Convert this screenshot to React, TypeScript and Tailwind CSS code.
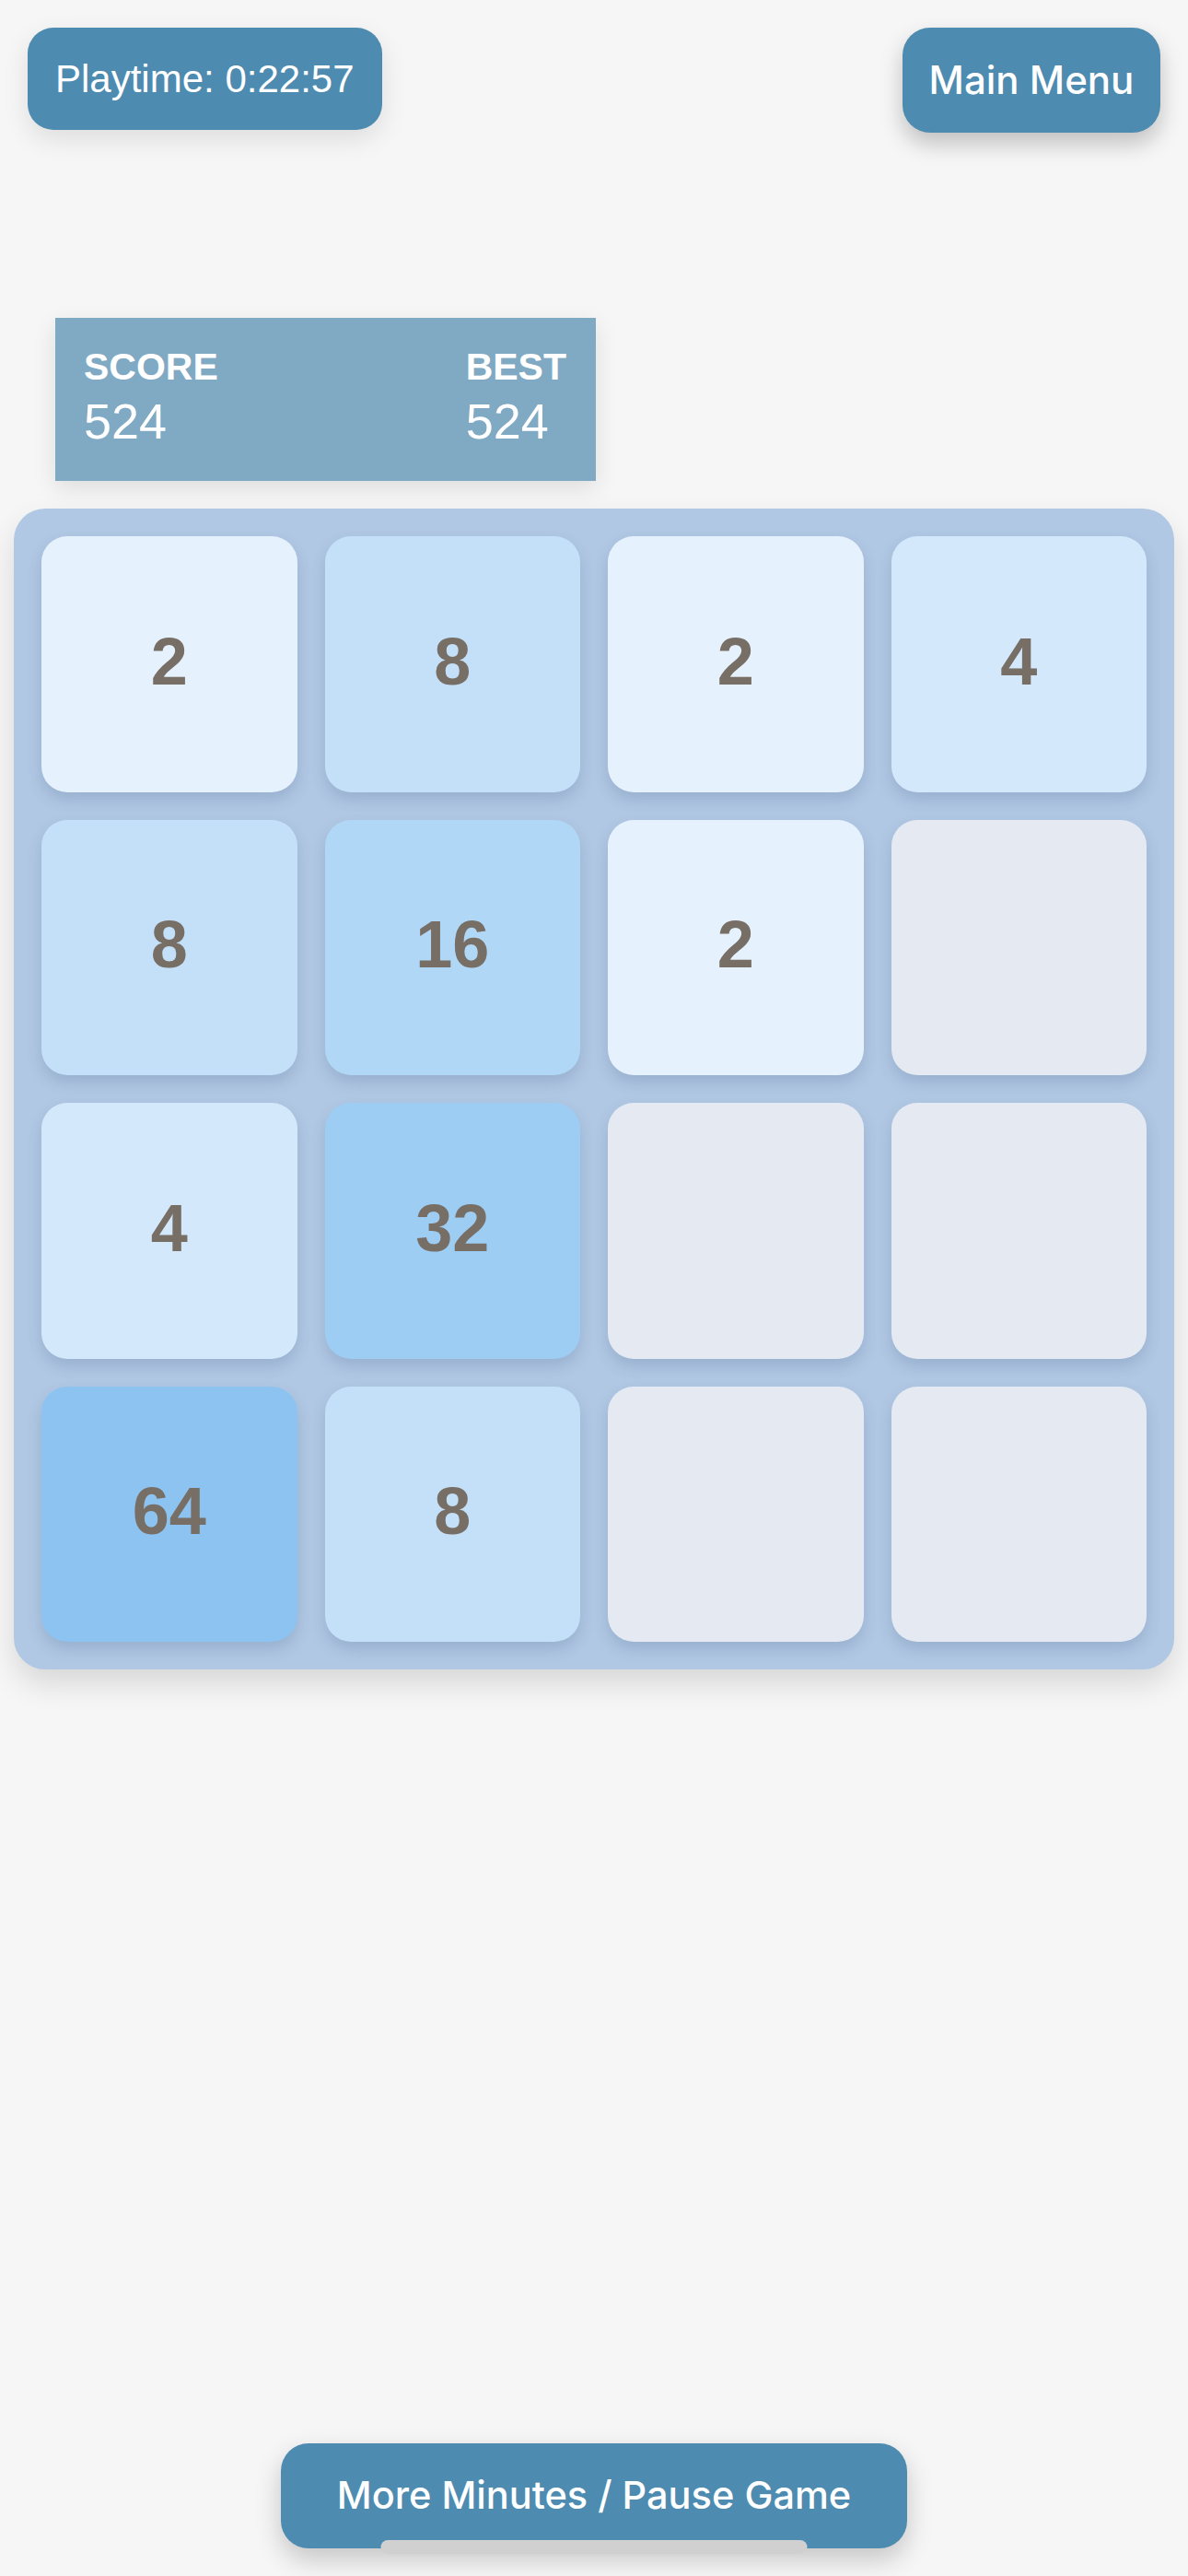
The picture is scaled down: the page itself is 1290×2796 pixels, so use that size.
import React from "react";

const tiles: (number | null)[][] = [
  [2, 8, 2, 4],
  [8, 16, 2, null],
  [4, 32, null, null],
  [64, 8, null, null],
];

function tileClass(v: number | null): string {
  switch (v) {
    case 2:
      return "bg-[#e5f1fd]";
    case 4:
      return "bg-[#d4e8fb]";
    case 8:
      return "bg-[#c3e0f8]";
    case 16:
      return "bg-[#b1d7f6]";
    case 32:
      return "bg-[#9ecdf4]";
    case 64:
      return "bg-[#8dc3f0]";
    default:
      return "bg-[#e5eaf2]";
  }
}

export default function App() {
  return (
    <div className="relative min-h-[2796px] w-full bg-[#f6f6f6] flex flex-col font-['Liberation_Sans',Arial,sans-serif]">
      {/* Top bar */}
      <div className="flex justify-between items-start px-[30px] pt-[30px]">
        <div className="h-[111px] px-[30px] flex items-center rounded-[28px] bg-[#4e8bb0] text-white text-[42px] leading-none shadow-[0_10px_28px_rgba(0,0,0,0.10)]">
          Playtime: 0:22:57
        </div>
        <div className="h-[114px] w-[280px] flex items-center justify-center rounded-[30px] bg-[#4e8bb0] text-white text-[42px] leading-none font-medium font-['Inter',sans-serif] shadow-[0_12px_24px_rgba(0,0,0,0.22)]">
          Main Menu
        </div>
      </div>

      {/* Score box */}
      <div className="ml-[60px] mt-[201px] w-[587px] h-[177px] bg-[#80a9c4] pl-[31px] pr-[32px] pt-[33px] flex justify-between text-white shadow-[0_8px_24px_rgba(0,0,0,0.10)]">
        <div className="flex flex-col">
          <div className="text-[41px] leading-none font-bold">SCORE</div>
          <div className="mt-[11px] text-[54px] leading-none">524</div>
        </div>
        <div className="flex flex-col">
          <div className="text-[41px] leading-none font-bold">BEST</div>
          <div className="mt-[11px] text-[54px] leading-none">524</div>
        </div>
      </div>

      {/* Board */}
      <div className="ml-[15px] mt-[30px] w-[1260px] h-[1260px] rounded-[34px] bg-[#b1c8e4] p-[30px] grid grid-cols-4 grid-rows-4 gap-[30px] shadow-[0_16px_32px_rgba(0,0,0,0.12)]">
        {tiles.flat().map((v, i) => (
          <div
            key={i}
            className={`${tileClass(v)} rounded-[28px] flex items-center justify-center pb-[6px] text-[72px] font-bold leading-none text-[#776e65] shadow-[0_8px_16px_rgba(40,70,110,0.18)]`}
          >
            {v ?? ""}
          </div>
        ))}
      </div>

      <div className="flex-1" />

      {/* Bottom button */}
      <div className="flex justify-center mb-[30px]">
        <div className="w-[680px] h-[114px] rounded-[30px] bg-[#4e8bb0] flex items-center justify-center text-white text-[41.5px] font-medium leading-none font-['Inter',sans-serif] shadow-[0_12px_28px_rgba(0,0,0,0.20)]">
          More Minutes / Pause Game
        </div>
      </div>

      {/* Home indicator */}
      <div className="absolute bottom-[24px] left-1/2 -translate-x-1/2 w-[463px] h-[15px] rounded-full bg-[#d0d0d0]" />
    </div>
  );
}
